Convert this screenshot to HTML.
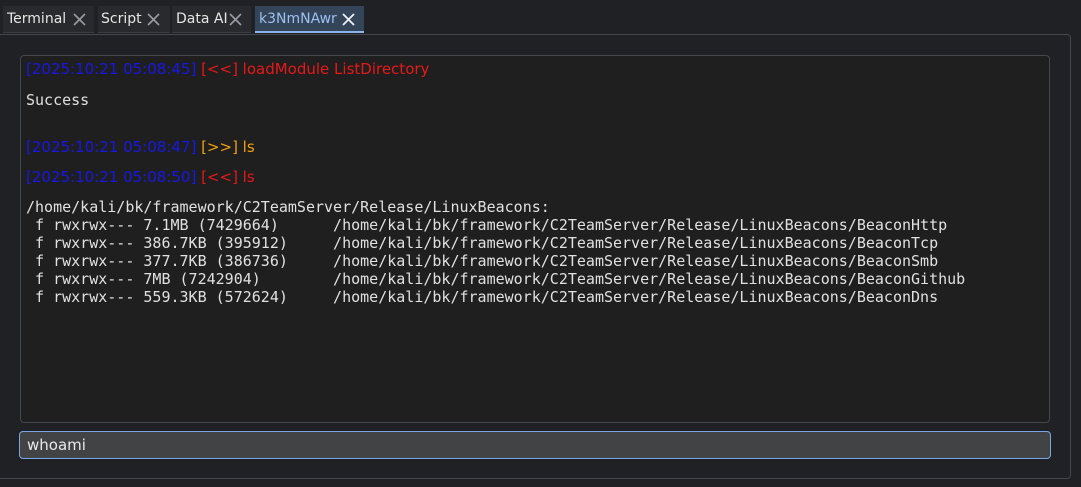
<!DOCTYPE html>
<html><head><style>
html,body{margin:0;padding:0;background:#202125;width:1081px;height:487px;overflow:hidden;font-family:"DejaVu Sans","Liberation Sans",sans-serif;}
.tab{position:absolute;top:6px;height:27px;background:#292a2e;color:#e6e6e6;font-size:14px;line-height:27px;box-sizing:border-box;border-bottom:1px solid #3a3b40;}
.tab .t{position:absolute;top:0;}
.tab svg{position:absolute;top:7px;}
.tab.active{background:#34455a;color:#9cc0f0;border-bottom:2px solid #8ab4ec;}
.outer{position:absolute;left:0;top:34px;width:1071px;height:445px;border:1px solid #46474c;border-left:none;border-radius:0 4px 4px 0;box-sizing:border-box;}
.inner{position:absolute;left:20px;top:55px;width:1030px;height:368px;background:#1f1f1f;border:1px solid #46474c;border-radius:4px;box-sizing:border-box;}
.l{position:absolute;left:26px;font-size:15px;white-space:pre;}
.m{position:absolute;left:26px;font-family:"DejaVu Sans Mono","Liberation Mono",monospace;font-size:15px;white-space:pre;color:#e0e0e0;line-height:18px;}
.b{color:#1717e8}.r{color:#e81818}.o{color:#f0a010}
.inp{position:absolute;left:19px;top:431px;width:1032px;height:28px;background:#424345;border:1px solid #7aa6e8;border-radius:4px;box-sizing:border-box;color:#eaeaea;font-size:15px;line-height:26px;padding-left:7px;}
</style></head><body>
<div class="tab" style="left:3px;width:91px"><span class="t" style="left:4px">Terminal</span><svg style="left:70px" width="13" height="13"><path d="M1 1L12 12M12 1L1 12" stroke="#9a9ca2" stroke-width="1.6"/></svg></div>
<div class="tab" style="left:98px;width:72px"><span class="t" style="left:3px">Script</span><svg style="left:49px" width="13" height="13"><path d="M1 1L12 12M12 1L1 12" stroke="#9a9ca2" stroke-width="1.6"/></svg></div>
<div class="tab" style="left:172px;width:79px"><span class="t" style="left:4px">Data AI</span><svg style="left:57px" width="13" height="13"><path d="M1 1L12 12M12 1L1 12" stroke="#9a9ca2" stroke-width="1.6"/></svg></div>
<div class="tab active" style="left:255px;width:109px"><span class="t" style="left:4px">k3NmNAwr</span><svg style="left:87px" width="13" height="13"><path d="M1 1L12 12M12 1L1 12" stroke="#eef2f8" stroke-width="1.8"/></svg></div>
<div class="outer"></div>
<div class="inner"></div>
<div class="l" style="top:60px"><span class="b">[2025:10:21 05:08:45]</span> <span class="r">[&lt;&lt;] loadModule ListDirectory</span></div>
<div class="m" style="top:91px">Success</div>
<div class="l" style="top:138px"><span class="b">[2025:10:21 05:08:47]</span> <span class="o">[&gt;&gt;] ls</span></div>
<div class="l" style="top:168px"><span class="b">[2025:10:21 05:08:50]</span> <span class="r">[&lt;&lt;] ls</span></div>
<div class="m" style="top:198px">/home/kali/bk/framework/C2TeamServer/Release/LinuxBeacons:
 f rwxrwx--- 7.1MB (7429664)      /home/kali/bk/framework/C2TeamServer/Release/LinuxBeacons/BeaconHttp
 f rwxrwx--- 386.7KB (395912)     /home/kali/bk/framework/C2TeamServer/Release/LinuxBeacons/BeaconTcp
 f rwxrwx--- 377.7KB (386736)     /home/kali/bk/framework/C2TeamServer/Release/LinuxBeacons/BeaconSmb
 f rwxrwx--- 7MB (7242904)        /home/kali/bk/framework/C2TeamServer/Release/LinuxBeacons/BeaconGithub
 f rwxrwx--- 559.3KB (572624)     /home/kali/bk/framework/C2TeamServer/Release/LinuxBeacons/BeaconDns</div>
<div class="inp">whoami</div>
</body></html>
